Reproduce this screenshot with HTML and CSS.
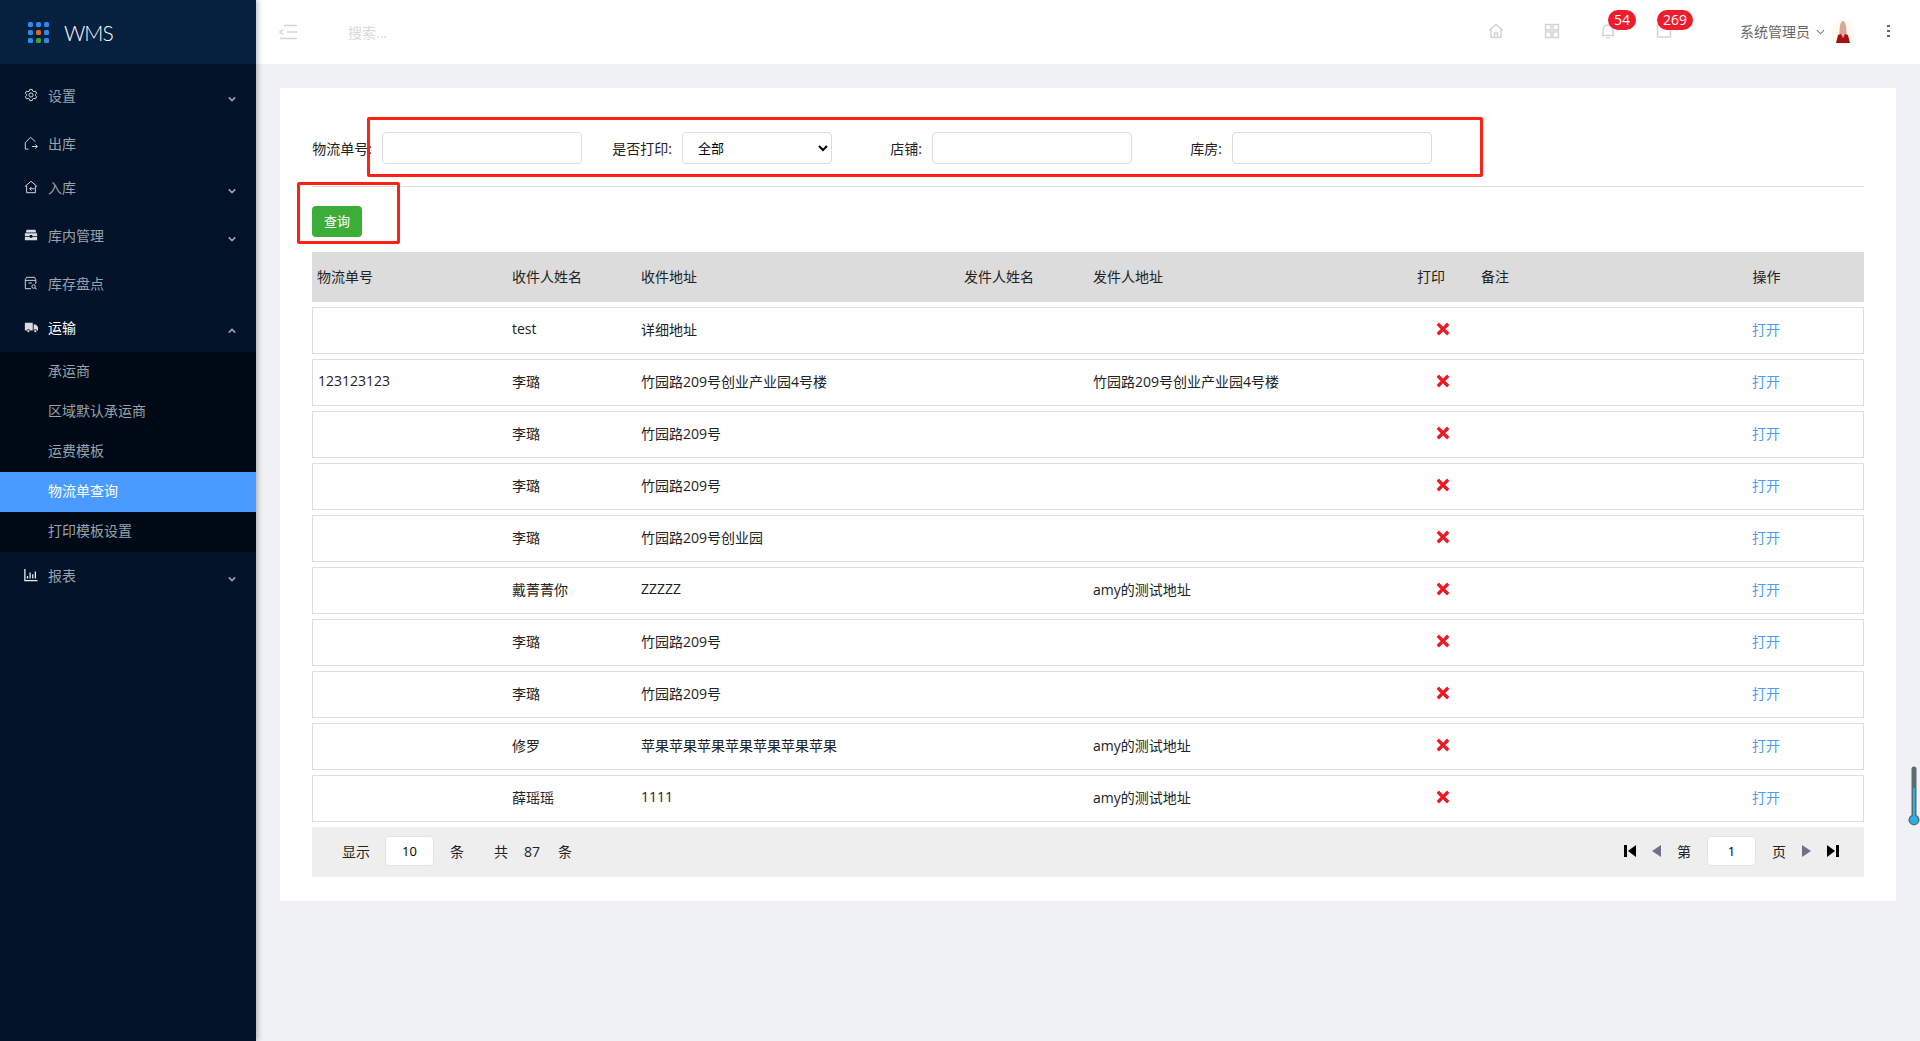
FILE: index.html
```html
<!DOCTYPE html>
<html lang="zh-CN">
    <head>
        <meta charset="UTF-8">
        <title>WMS</title>
        <link rel="stylesheet" href="styles.css">
    </head>
    <body>
        <div class="sidebar">
            <div class="logo">
                <div class="logo-dots">
                    <i></i><i></i><i></i>
                    <i></i><i class="orange"></i><i></i>
                    <i></i><i class="green"></i><i></i>
                </div>
                <span class="logo-text">WMS</span>
            </div>
            <ul class="menu">
                <li class="item">
                    <svg class="icon" viewBox="0 0 16 16"><circle cx="8" cy="8" r="2.4"/><path d="M6.6 1.6h2.8l.4 1.8 1.5.8 1.8-.6 1.4 2.4-1.4 1.2v1.6l1.4 1.2-1.4 2.4-1.8-.6-1.5.8-.4 1.8H6.600l-.4-1.800-1.500-.8-1.800.6-1.400-2.400 1.400-1.200V7.200L1.500 6l1.400-2.400 1.800.6 1.500-.8z"/></svg>
                    <span>设置</span>
                    <svg class="arrow" viewBox="0 0 10 6"><path d="M1 1l4 4 4-4"/></svg>
                </li>
                <li class="item">
                    <svg class="icon" viewBox="0 0 16 16"><path d="M3 15H1.500V7.500L7.500 1.500l5.500 5M9 12h6.200M12.800 9.500l2.500 2.500-2.500 2.500M5 15H3"/></svg>
                    <span>出库</span>
                </li>
                <li class="item short">
                    <svg class="icon" viewBox="0 0 16 16"><path d="M1 7.500L8 1.500l7 6M3 6.500V14.500h10V6.500M12 10H6.500M8.500 8L6.500 10l2 2"/></svg>
                    <span>入库</span>
                    <svg class="arrow" viewBox="0 0 10 6"><path d="M1 1l4 4 4-4"/></svg>
                </li>
                <li class="item">
                    <svg class="icon fill" viewBox="0 0 16 16"><path d="M3 2h10l1 3H2zM1 6h14v3H9.500V8h-3v1H1zM1 10h5.500v1h3v-1H15v4H1z"/></svg>
                    <span>库内管理</span>
                    <svg class="arrow" viewBox="0 0 10 6"><path d="M1 1l4 4 4-4"/></svg>
                </li>
                <li class="item">
                    <svg class="icon" viewBox="0 0 16 16"><path d="M8 14.500H1.500V4L3 1.500h9L13.500 4v5M1.500 5h12M5 8h4"/><circle cx="11" cy="12" r="2"/><path d="M12.500 13.500l2 1.500"/></svg>
                    <span>库存盘点</span>
                </li>
                <li class="item short open">
                    <svg class="icon fill" viewBox="0 0 16 16"><path d="M1 3h9v9H7a2 2 0 0 0-3.800 0H1zM11 5h2.500L16 8v4h-1a2 2 0 0 0-3.800 0H11z"/><circle cx="5" cy="12.800" r="1.300"/><circle cx="13" cy="12.800" r="1.300"/></svg>
                    <span>运输</span>
                    <svg class="arrow" viewBox="0 0 10 6"><path d="M1 5l4-4 4 4"/></svg>
                </li>
                <li>
                    <ul class="submenu">
                        <li>承运商</li>
                        <li>区域默认承运商</li>
                        <li>运费模板</li>
                        <li class="active">物流单查询</li>
                        <li>打印模板设置</li>
                    </ul>
                </li>
                <li class="item">
                    <svg class="icon bars" viewBox="0 0 16 16"><path d="M1 1v13.500h14.500M4 12V9M7 12V5M10 12V7M13 12V4"/></svg>
                    <span>报表</span>
                    <svg class="arrow" viewBox="0 0 10 6"><path d="M1 1l4 4 4-4"/></svg>
                </li>
            </ul>
        </div>

        <div class="main">
            <div class="header">
                <svg class="toggle" viewBox="0 0 18 16"><path d="M5 1.500h13M8 8h10M1 14.500h17M4 5.500L1 8l3 2.500"/></svg>
                <span class="search">搜索...</span>
                <div class="header-right">
                    <span class="head-btn">
                        <svg viewBox="0 0 16 16"><path d="M1 7.500L8 1.500l7 6M3 6.500v8h10v-8M6.500 14.500V10h3v4.500"/></svg>
                    </span>
                    <span class="head-btn">
                        <svg viewBox="0 0 16 16"><rect x="1.500" y="1.500" width="5.500" height="5.500"/><rect x="9" y="1.500" width="5.500" height="5.500"/><rect x="1.500" y="9" width="5.500" height="5.500"/><rect x="9" y="9" width="5.500" height="5.500"/></svg>
                    </span>
                    <span class="head-btn">
                        <svg viewBox="0 0 16 16"><path d="M3 12.500V7a5 5 0 0 1 10 0v5.500M1.500 12.500h13M6.500 15h3"/></svg>
                        <b class="badge">54</b>
                    </span>
                    <span class="head-btn">
                        <svg viewBox="0 0 16 16"><rect x="1.500" y="2" width="13" height="12"/></svg>
                        <b class="badge">269</b>
                    </span>
                    <span class="user">系统管理员</span>
                    <svg class="user-arrow" viewBox="0 0 10 6"><path d="M1 1l4 4 4-4"/></svg>
                    <svg class="avatar" viewBox="0 0 24 24">
                        <circle cx="12" cy="12" r="12" fill="#fffaf0"/>
                        <path d="M8.500 12c0-7 1.500-11 3.500-11s3.500 4 3.500 11l.5 5H8z" fill="#d9a89c"/>
                        <path d="M5 23l2-8 3-1 2 4 2-4 3 1 2 8z" fill="#a81010"/>
                    </svg>
                    <span class="kebab"><i></i><i></i><i></i></span>
                </div>
            </div>

            <div class="content">
                <div class="card">
                    <form class="filter">
                        <label class="field"><span>物流单号:</span><input type="text" class="txt"></label>
                        <label class="field"><span>是否打印:</span>
                            <select class="txt sel"><option>全部</option></select>
                        </label>
                        <label class="field"><span>店铺:</span><input type="text" class="txt"></label>
                        <label class="field"><span>库房:</span><input type="text" class="txt"></label>
                    </form>
                    <button type="button" class="btn-query">查询</button>

                    <table class="list">
                        <thead>
                            <tr>
                                <th class="c1">物流单号</th>
                                <th class="c2">收件人姓名</th>
                                <th class="c3">收件地址</th>
                                <th class="c4">发件人姓名</th>
                                <th class="c5">发件人地址</th>
                                <th class="c6">打印</th>
                                <th class="c7">备注</th>
                                <th class="c8">操作</th>
                            </tr>
                        </thead>
                        <tbody>
                            <tr><td></td><td>test</td><td>详细地址</td><td></td><td></td><td class="mark"><svg viewBox="0 0 12 12"><path d="M1.500 1.500l9 9M10.500 1.500l-9 9"/></svg></td><td></td><td class="open-link">打开</td></tr>
                            <tr><td>123123123</td><td>李璐</td><td>竹园路209号创业产业园4号楼</td><td></td><td>竹园路209号创业产业园4号楼</td><td class="mark"><svg viewBox="0 0 12 12"><path d="M1.500 1.500l9 9M10.500 1.500l-9 9"/></svg></td><td></td><td class="open-link">打开</td></tr>
                            <tr><td></td><td>李璐</td><td>竹园路209号</td><td></td><td></td><td class="mark"><svg viewBox="0 0 12 12"><path d="M1.500 1.500l9 9M10.500 1.500l-9 9"/></svg></td><td></td><td class="open-link">打开</td></tr>
                            <tr><td></td><td>李璐</td><td>竹园路209号</td><td></td><td></td><td class="mark"><svg viewBox="0 0 12 12"><path d="M1.500 1.500l9 9M10.500 1.500l-9 9"/></svg></td><td></td><td class="open-link">打开</td></tr>
                            <tr><td></td><td>李璐</td><td>竹园路209号创业园</td><td></td><td></td><td class="mark"><svg viewBox="0 0 12 12"><path d="M1.500 1.500l9 9M10.500 1.500l-9 9"/></svg></td><td></td><td class="open-link">打开</td></tr>
                            <tr><td></td><td>戴菁菁你</td><td>ZZZZZ</td><td></td><td>amy的测试地址</td><td class="mark"><svg viewBox="0 0 12 12"><path d="M1.500 1.500l9 9M10.500 1.500l-9 9"/></svg></td><td></td><td class="open-link">打开</td></tr>
                            <tr><td></td><td>李璐</td><td>竹园路209号</td><td></td><td></td><td class="mark"><svg viewBox="0 0 12 12"><path d="M1.500 1.500l9 9M10.500 1.500l-9 9"/></svg></td><td></td><td class="open-link">打开</td></tr>
                            <tr><td></td><td>李璐</td><td>竹园路209号</td><td></td><td></td><td class="mark"><svg viewBox="0 0 12 12"><path d="M1.500 1.500l9 9M10.500 1.500l-9 9"/></svg></td><td></td><td class="open-link">打开</td></tr>
                            <tr><td></td><td>修罗</td><td>苹果苹果苹果苹果苹果苹果苹果</td><td></td><td>amy的测试地址</td><td class="mark"><svg viewBox="0 0 12 12"><path d="M1.500 1.500l9 9M10.500 1.500l-9 9"/></svg></td><td></td><td class="open-link">打开</td></tr>
                            <tr><td></td><td>薛瑶瑶</td><td>1111</td><td></td><td>amy的测试地址</td><td class="mark"><svg viewBox="0 0 12 12"><path d="M1.500 1.500l9 9M10.500 1.500l-9 9"/></svg></td><td></td><td class="open-link">打开</td></tr>
                        </tbody>
                    </table>

                    <div class="pager">
                        <div class="pager-left">
                            <span>显示</span>
                            <input type="text" class="page-input" value="10">
                            <span>条</span>
                            <span class="total">共</span>
                            <span>87</span>
                            <span class="total-end">条</span>
                        </div>
                        <div class="pager-right">
                            <svg class="pg" viewBox="0 0 12 12"><path d="M0 0h3v12H0zM12 0v12L4 6z"/></svg>
                            <svg class="pg dim" viewBox="0 0 9 12"><path d="M9 0v12L0 6z"/></svg>
                            <span>第</span>
                            <input type="text" class="page-input" value="1">
                            <span>页</span>
                            <svg class="pg dim" viewBox="0 0 9 12"><path d="M0 0v12l9-6z"/></svg>
                            <svg class="pg" viewBox="0 0 12 12"><path d="M0 0v12l8-6zM9 0h3v12H9z"/></svg>
                        </div>
                    </div>

                    <!-- 红框标注 -->
                    <div class="note note-filter"></div>
                    <div class="note note-btn"></div>
                </div>
            </div>
        </div>

        <svg class="thermo" viewBox="0 0 12 60">
            <path d="M3.500 3a2.500 2.500 0 0 1 5 0v46a5.500 5.500 0 1 1-5 0z" fill="#5d6a74"/>
            <rect x="5" y="22" width="2" height="30" fill="#2ab0e8"/>
            <circle cx="6" cy="54" r="4" fill="#2ab0e8"/>
        </svg>
    </body>
</html>
```

FILE: styles.css
```css
* {
    box-sizing: border-box;
}

body {
    margin: 0;
    height: 100vh;
    display: flex;
    overflow: hidden;
    background-color: #f0f1f5;
    color: #222;
    font-family: "Open Sans", "Noto Sans CJK SC", sans-serif;
    font-size: 14px;
}

ul {
    margin: 0;
    padding: 0;
    list-style: none;
}

/* sidebar */
.sidebar {
    width: 256px;
    flex-shrink: 0;
    background-color: #021329;
    box-shadow: 2px 0 5px rgba(0, 0, 0, 0.25);
    z-index: 2;
}

.logo {
    height: 64px;
    padding-left: 28px;
    display: flex;
    align-items: center;
    gap: 15px;
    background-color: #05213f;
}

.logo-dots {
    width: 21px;
    display: grid;
    grid-template-columns: repeat(3, 5px);
    grid-auto-rows: 5px;
    gap: 3px;
}

.logo-dots i {
    border-radius: 1.5px;
    background-color: #2a8cf0;
}

.logo-dots .orange {
    background-color: #e8650f;
}

.logo-dots .green {
    background-color: #3aa535;
}

.logo-text {
    color: #fff;
    font-family: "Lato", sans-serif;
    font-weight: 300;
    font-size: 21px;
    letter-spacing: -1px;
}

.menu {
    padding-top: 8px;
}

.item {
    height: 48px;
    padding-left: 24px;
    padding-bottom: 2px;
    display: flex;
    align-items: center;
    color: #98a2ad;
    position: relative;
}

.item.short {
    height: 40px;
    margin-bottom: 4px;
}

.item.open {
    color: #fff;
}

.icon {
    width: 14px;
    height: 14px;
    margin: 0 10px 0 0;
    fill: none;
    stroke: #d8dce0;
    stroke-width: 1.100;
}

.icon.fill {
    fill: #d8dce0;
    stroke: none;
}

.icon.bars {
    stroke: #e8eaec;
    stroke-width: 1.500;
}

.arrow {
    position: absolute;
    left: 228px;
    top: 50%;
    width: 8px;
    height: 6px;
    fill: none;
    stroke: #98a2ad;
    stroke-width: 2;
}

.submenu {
    background-color: #000a16;
}

.submenu li {
    height: 40px;
    line-height: 38px;
    padding-left: 48px;
    color: #98a2ad;
}

.submenu .active {
    background-color: #4a9bff;
    color: #fff;
}

/* header */
.main {
    flex: 1;
    min-width: 0;
}

.header {
    height: 64px;
    padding-left: 23px;
    display: flex;
    align-items: center;
    background-color: #fff;
}

.toggle {
    width: 18px;
    height: 16px;
    fill: none;
    stroke: #d4d4d4;
    stroke-width: 1.600;
}

.search {
    margin-left: 51px;
    color: #d8d8d8;
}

.header-right {
    margin-left: auto;
    display: flex;
    align-items: center;
}

.head-btn {
    width: 56px;
    margin-bottom: 2px;
    display: flex;
    justify-content: center;
    position: relative;
}

.head-btn svg {
    width: 16px;
    height: 16px;
    fill: none;
    stroke: #d2d2d2;
    stroke-width: 1.400;
}

.badge {
    position: absolute;
    left: 28px;
    top: -13px;
    min-width: 28px;
    height: 20px;
    padding: 0 6px;
    border-radius: 10px;
    background-color: #ee1c2c;
    color: #fff;
    font-weight: normal;
    line-height: 20px;
    text-align: center;
}

.head-btn:nth-child(4) .badge {
    left: 21px;
}

.user {
    margin-left: 48px;
    margin-bottom: 2px;
    color: #666;
}

.user-arrow {
    width: 9px;
    height: 6px;
    margin-left: 6px;
    fill: none;
    stroke: #777;
    stroke-width: 1.200;
}

.avatar {
    width: 24px;
    height: 24px;
    margin-left: 6px;
}

.kebab {
    width: 3px;
    margin: 0 30px 2px 32px;
    display: flex;
    flex-direction: column;
    gap: 3px;
}

.kebab i {
    height: 2px;
    background-color: #666;
}

/* content */
.content {
    padding: 24px;
}

.card {
    position: relative;
    padding: 44px 32px 24px;
    background-color: #fff;
}

.filter {
    display: flex;
    gap: 30px;
    padding-bottom: 22px;
    border-bottom: 1px solid #ddd;
}

.field {
    display: flex;
    align-items: center;
}

.field span {
    width: 70px;
    padding-right: 10px;
    text-align: right;
    white-space: nowrap;
}

.txt {
    width: 200px;
    height: 32px;
    border: 1px solid #ddd;
    border-radius: 4px;
    background-color: #fff;
    font: inherit;
}

.sel {
    width: 150px;
    padding-left: 11px;
    font-size: 13px;
}

.btn-query {
    display: block;
    width: 50px;
    height: 31px;
    margin-top: 19px;
    padding-bottom: 3px;
    border: none;
    border-radius: 4px;
    background-color: #3cae38;
    color: #fff;
    font: inherit;
    font-size: 13px;
}

/* table */
.list {
    width: 100%;
    margin-top: 10px;
    table-layout: fixed;
    border-collapse: separate;
    border-spacing: 0 5px;
}

.list th {
    height: 50px;
    padding: 0 5px 2px;
    background-color: #dcdcdc;
    font-weight: normal;
    text-align: left;
}

.list .c1 { width: 195px; }
.list .c2 { width: 129px; }
.list .c3 { width: 323px; }
.list .c4 { width: 129px; }
.list .c5 { width: 324px; }
.list .c6 { width: 64px; }
.list .c7 { width: 193px; }
.list .c8 { text-align: center; }

.list td {
    height: 47px;
    padding: 0 5px 4px;
    border-top: 1px solid #ddd;
    border-bottom: 1px solid #ddd;
}

.list td:first-child {
    border-left: 1px solid #ddd;
}

.list td:last-child {
    border-right: 1px solid #ddd;
}

.list .mark {
    padding-right: 7px;
    padding-bottom: 3px;
}

.mark svg {
    display: block;
    width: 14px;
    height: 14px;
    margin: 0 auto;
    stroke: #ec1a24;
    stroke-width: 2.800;
}

.open-link {
    text-align: center;
    color: #4c9cf5;
}

/* pager */
.pager {
    height: 50px;
    padding-bottom: 2px;
    display: flex;
    justify-content: space-between;
    align-items: center;
    background-color: #eee;
}

.pager-left,
.pager-right {
    display: flex;
    align-items: center;
    gap: 16px;
}

.pager-left {
    padding-left: 30px;
}

.pager-left .page-input {
    margin-left: -1px;
}

.pager-right {
    padding-right: 25px;
}

.pager .total {
    margin-left: 14px;
}

.pager .total-end {
    margin-left: 2px;
}

.page-input {
    width: 49px;
    height: 30px;
    border: 1px solid #e4e4e4;
    border-radius: 4px;
    background-color: #fff;
    font: inherit;
    font-size: 13px;
    text-align: center;
}

.pg {
    width: 12px;
    height: 12px;
    fill: #000;
}

.pg.dim {
    width: 9px;
    fill: #70708c;
}

/* annotations */
.note {
    position: absolute;
    border: 3px solid #ff2016;
    border-radius: 2px;
}

.note-filter {
    left: 87px;
    top: 29px;
    width: 1116px;
    height: 60px;
}

.note-btn {
    left: 17px;
    top: 94px;
    width: 103px;
    height: 62px;
}

.thermo {
    position: fixed;
    right: 0;
    top: 766px;
    width: 12px;
    height: 60px;
}
```
